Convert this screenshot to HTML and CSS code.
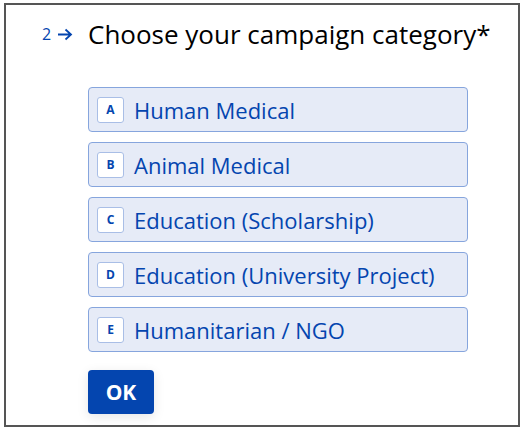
FILE: index.html
```html
<!DOCTYPE html>
<html>
<head>
<meta charset="utf-8">
<link rel="stylesheet" href="styles.css">
</head>
<body>
<div class="frame">
  <div class="question">
    <div class="prefix"><span class="num">2</span><svg class="arrow" width="16" height="13" viewBox="0 0 16 13"><path d="M1 6.5H14M8.5 1.5L14 6.5L8.5 11.5" fill="none" stroke="#0445AF" stroke-width="1.8"/></svg></div>
    <div class="body">
      <h1 class="title">Choose your campaign category*</h1>
      <div class="options">
        <div class="option"><span class="key">A</span><span class="label">Human Medical</span></div>
        <div class="option"><span class="key">B</span><span class="label">Animal Medical</span></div>
        <div class="option"><span class="key">C</span><span class="label">Education (Scholarship)</span></div>
        <div class="option"><span class="key">D</span><span class="label">Education (University Project)</span></div>
        <div class="option"><span class="key">E</span><span class="label">Humanitarian / NGO</span></div>
      </div>
      <button class="ok">OK</button>
    </div>
  </div>
</div>
</body>
</html>
```
FILE: styles.css
```css
html, body {
  margin: 0;
  padding: 0;
  background: #fff;
}
body {
  font-family: "Open Sans", "Noto Sans", sans-serif;
}
.frame {
  box-sizing: border-box;
  margin: 3px 3px 0 4px;
  height: 424px;
  border: 2px solid #555;
}
.question {
  display: flex;
  align-items: flex-start;
  padding-top: 11px;
}
.prefix {
  width: 82px;
  flex: none;
  box-sizing: border-box;
  padding-left: 36px;
  padding-top: 8px;
  display: flex;
  align-items: center;
  gap: 6px;
  color: #0445AF;
}
.num {
  font-size: 16px;
  line-height: 20px;
}
.arrow {
  display: block;
}
.body {
  display: flex;
  flex-direction: column;
}
.title {
  margin: 0;
  font-size: 26px;
  font-weight: 400;
  line-height: 36px;
  color: #000;
  white-space: nowrap;
}
.options {
  margin-top: 35px;
  display: flex;
  flex-direction: column;
  gap: 10px;
}
.option {
  box-sizing: border-box;
  width: 380px;
  height: 45px;
  background: #E6EBF7;
  border: 1px solid #86A5DD;
  border-radius: 4px;
  display: flex;
  align-items: center;
  padding-left: 8px;
  color: #0445AF;
}
.key {
  box-sizing: border-box;
  width: 27px;
  height: 26px;
  background: #fff;
  border: 1px solid #A9BEE6;
  border-radius: 3px;
  display: flex;
  align-items: center;
  justify-content: center;
  font-size: 12px;
  font-weight: 700;
}
.label {
  margin-left: 10px;
  font-size: 22px;
}
.ok {
  margin-top: 18px;
  width: 66px;
  height: 44px;
  border: none;
  border-radius: 4px;
  background: #0445AF;
  color: #fff;
  font-family: "Open Sans", sans-serif;
  font-weight: 700;
  font-size: 21px;
  box-shadow: 0 3px 12px rgba(0,0,0,0.1);
  padding: 0;
}
```
